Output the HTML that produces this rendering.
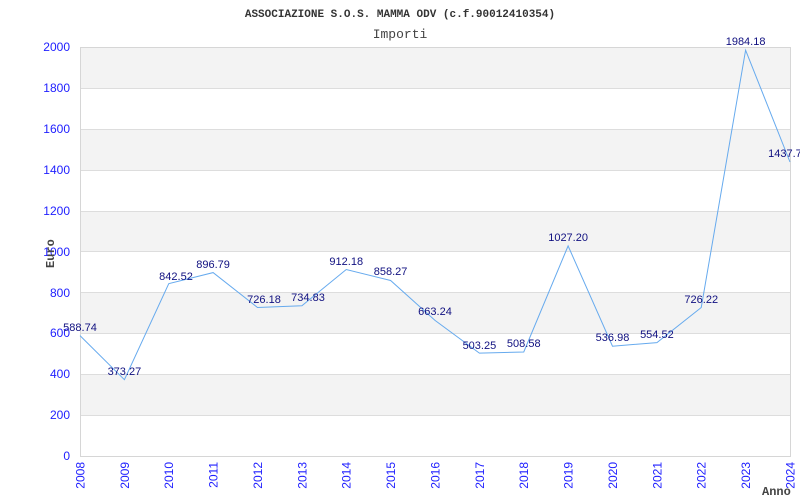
<!DOCTYPE html>
<html><head><meta charset="utf-8"><style>
html,body{margin:0;padding:0;background:#fff;width:800px;height:500px;overflow:hidden}
svg{display:block}
</style></head><body>
<svg width="800" height="500" xmlns="http://www.w3.org/2000/svg">
<text x="400" y="17" text-anchor="middle" font-family="Liberation Mono, monospace" font-weight="bold" font-size="11" fill="#333">ASSOCIAZIONE S.O.S. MAMMA ODV (c.f.90012410354)</text>
<text x="400" y="38" text-anchor="middle" font-family="Liberation Mono, monospace" font-size="13" fill="#444">Importi</text>
<g fill="#f3f3f3">
<rect x="80" y="47" width="710" height="41"/>
<rect x="80" y="129" width="710" height="41"/>
<rect x="80" y="211" width="710" height="41"/>
<rect x="80" y="292" width="710" height="41"/>
<rect x="80" y="374" width="710" height="41"/>
</g>
<g stroke="#ddd" stroke-width="1">
<line x1="80" y1="88.5" x2="790" y2="88.5"/><line x1="80" y1="129.5" x2="790" y2="129.5"/>
<line x1="80" y1="170.5" x2="790" y2="170.5"/><line x1="80" y1="211.5" x2="790" y2="211.5"/>
<line x1="80" y1="251.5" x2="790" y2="251.5"/><line x1="80" y1="292.5" x2="790" y2="292.5"/>
<line x1="80" y1="333.5" x2="790" y2="333.5"/><line x1="80" y1="374.5" x2="790" y2="374.5"/>
<line x1="80" y1="415.5" x2="790" y2="415.5"/>
</g>
<rect x="80.5" y="47.5" width="710" height="409" fill="none" stroke="#d6d6d6"/>
<g font-family="Liberation Sans, sans-serif" font-size="12" fill="#2020ff" text-anchor="end">
<text x="70" y="51">2000</text><text x="70" y="92">1800</text><text x="70" y="133">1600</text>
<text x="70" y="174">1400</text><text x="70" y="215">1200</text><text x="70" y="256">1000</text>
<text x="70" y="297">800</text><text x="70" y="337">600</text><text x="70" y="378">400</text>
<text x="70" y="419">200</text><text x="70" y="460">0</text>
</g>
<g font-family="Liberation Sans, sans-serif" font-size="12" fill="#2020ff" text-anchor="end">
<text transform="translate(84.5,462) rotate(-90)">2008</text>
<text transform="translate(128.9,462) rotate(-90)">2009</text>
<text transform="translate(173.2,462) rotate(-90)">2010</text>
<text transform="translate(217.6,462) rotate(-90)">2011</text>
<text transform="translate(262,462) rotate(-90)">2012</text>
<text transform="translate(306.4,462) rotate(-90)">2013</text>
<text transform="translate(350.7,462) rotate(-90)">2014</text>
<text transform="translate(395.1,462) rotate(-90)">2015</text>
<text transform="translate(439.5,462) rotate(-90)">2016</text>
<text transform="translate(483.9,462) rotate(-90)">2017</text>
<text transform="translate(528.2,462) rotate(-90)">2018</text>
<text transform="translate(572.6,462) rotate(-90)">2019</text>
<text transform="translate(617,462) rotate(-90)">2020</text>
<text transform="translate(661.4,462) rotate(-90)">2021</text>
<text transform="translate(705.7,462) rotate(-90)">2022</text>
<text transform="translate(750.1,462) rotate(-90)">2023</text>
<text transform="translate(794.5,462) rotate(-90)">2024</text>
</g>
<text transform="translate(54,268) rotate(-90)" font-family="Liberation Mono, monospace" font-weight="bold" font-size="12" fill="#444">Euro</text>
<text x="762" y="495" font-family="Liberation Mono, monospace" font-weight="bold" font-size="12" fill="#444">Anno</text>
<polyline fill="none" stroke="#66aaee" stroke-width="1" points="80,335.6 124.4,379.7 168.75,283.7 213.1,272.6 257.5,307.5 301.9,305.7 346.25,269.5 390.6,280.5 435,320.4 479.4,353.1 523.75,352 568.1,245.9 612.5,346.2 656.9,342.6 701.25,307.5 745.6,50.2 790,162"/>
<g font-family="Liberation Sans, sans-serif" font-size="11" fill="#101080" text-anchor="middle">
<text x="80" y="331">588.74</text><text x="124.4" y="375">373.27</text><text x="176" y="280">842.52</text>
<text x="213.1" y="268">896.79</text><text x="264" y="303">726.18</text><text x="308" y="301">734.83</text>
<text x="346.25" y="265">912.18</text><text x="390.6" y="275">858.27</text><text x="435" y="315">663.24</text>
<text x="479.4" y="349">503.25</text><text x="523.75" y="347">508.58</text><text x="568.1" y="241">1027.20</text>
<text x="612.5" y="341">536.98</text><text x="656.9" y="338">554.52</text><text x="701.25" y="303">726.22</text>
<text x="745.6" y="45">1984.18</text><text x="788" y="157">1437.75</text>
</g>
</svg>
</body></html>
